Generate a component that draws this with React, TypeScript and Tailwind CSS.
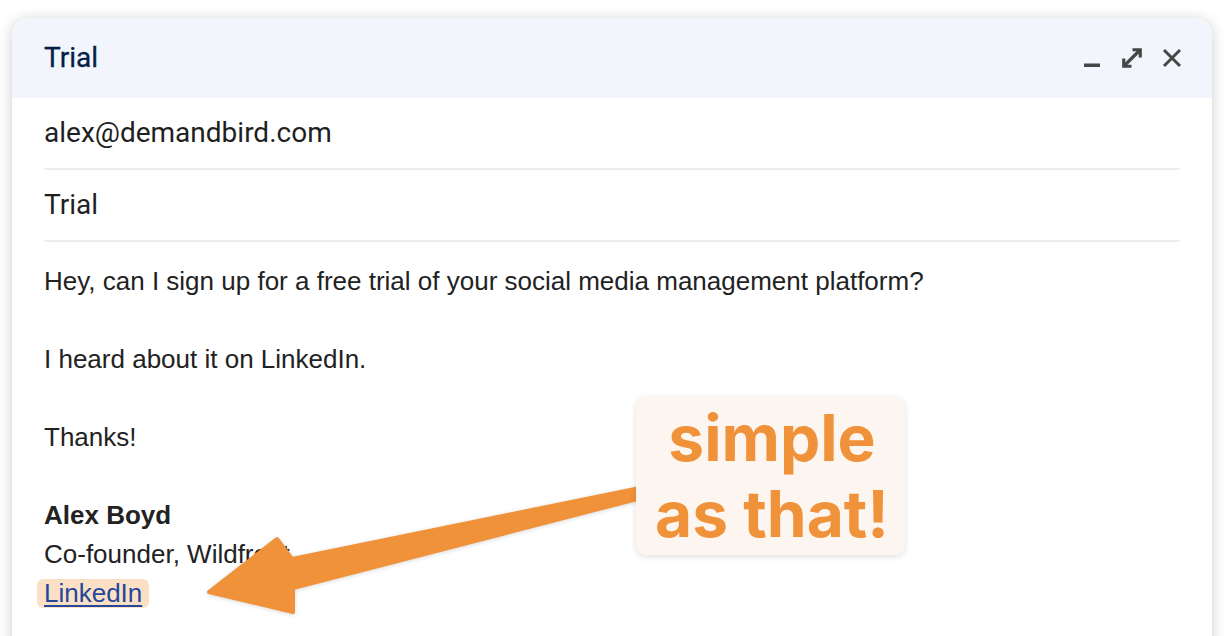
import React from "react"

function MinimizeIcon() {
  return (
    <svg width="16" height="20" viewBox="0 0 16 20" className="text-[#444746]">
      <rect x="0" y="15.5" width="16" height="3.5" fill="currentColor" />
    </svg>
  )
}

function ExpandIcon() {
  return (
    <svg width="20" height="20" viewBox="0 0 20 20" fill="none" className="text-[#444746]">
      <path d="M10.5 1.75H18.25V9.5" stroke="currentColor" strokeWidth="3.2" />
      <path d="M1.75 10.5V18.25H9.5" stroke="currentColor" strokeWidth="3.2" />
      <path d="M17.5 2.5L2.5 17.5" stroke="currentColor" strokeWidth="3.2" />
    </svg>
  )
}

function CloseIcon() {
  return (
    <svg width="20" height="20" viewBox="0 0 20 20" fill="none" className="text-[#444746]">
      <path d="M2 2L18 18M18 2L2 18" stroke="currentColor" strokeWidth="3" />
    </svg>
  )
}

export default function App() {
  return (
    <div className="relative h-[636px] w-[1230px] overflow-hidden bg-white pt-[18px]">
      <div className="ml-[12px] h-[640px] w-[1200px] rounded-t-[16px] bg-white shadow-[0_2px_14px_rgba(0,0,0,0.2)]">
        {/* title bar */}
        <div className="flex h-[80px] items-center rounded-t-[16px] bg-[#f2f6fc] pl-[32px] pr-[30px]">
          <span className="font-['Roboto',sans-serif] text-[28px] font-normal text-[#041e49] [-webkit-text-stroke:0.3px_#041e49]">Trial</span>
          <div className="ml-auto flex items-center">
            <MinimizeIcon />
            <div className="ml-[22px]">
              <ExpandIcon />
            </div>
            <div className="ml-[20px]">
              <CloseIcon />
            </div>
          </div>
        </div>

        <div className="pl-[32px] pr-[32px]">
          <div className="flex h-[72px] items-center border-b-2 border-[#ececf1] font-['Roboto',sans-serif] text-[28px] text-[#1f1f1f]">
            alex@demandbird.com
          </div>
          <div className="flex h-[72px] items-center border-b-2 border-[#ececf1] font-['Roboto',sans-serif] text-[28px] text-[#1f1f1f]">
            Trial
          </div>
          <div className="pt-[20px] font-['Liberation_Sans',Arial,sans-serif] text-[26px] leading-[39px] text-[#222222]">
            <p>Hey, can I sign up for a free trial of your social media management platform?</p>
            <p>&nbsp;</p>
            <p>I heard about it on LinkedIn.</p>
            <p>&nbsp;</p>
            <p>Thanks!</p>
            <p>&nbsp;</p>
            <p className="font-bold">Alex Boyd</p>
            <p>Co-founder, Wildfront</p>
            <p>
              <span className="-ml-[7px] inline-block rounded-[6px] bg-[#fbe0c6] px-[7px] leading-[29px] text-[#23489b] underline underline-offset-[3px]">
                LinkedIn
              </span>
            </p>
          </div>
        </div>
      </div>

      {/* annotation arrow */}
      <svg
        className="pointer-events-none absolute left-0 top-0 drop-shadow-[0_1px_2px_rgba(0,0,0,0.15)]"
        width="1230"
        height="636"
        viewBox="0 0 1230 636"
      >
        <polygon
          points="645,487 292,559 277,539 209,592 293,612 293,588 645,497"
          fill="#f0923a"
          stroke="#f0923a"
          strokeWidth="4"
          strokeLinejoin="round"
        />
      </svg>

      {/* annotation callout */}
      <div className="absolute left-[636px] top-[396px] flex h-[159px] w-[269px] flex-col items-center justify-center rounded-[10px] bg-[#fdf5ef] pl-[3px] font-['Inter',sans-serif] text-[64px] font-bold leading-[76px] text-[#f0923a] shadow-[0_2px_6px_rgba(0,0,0,0.12)]">
        <span>simple</span>
        <span>as that!</span>
      </div>
    </div>
  )
}
